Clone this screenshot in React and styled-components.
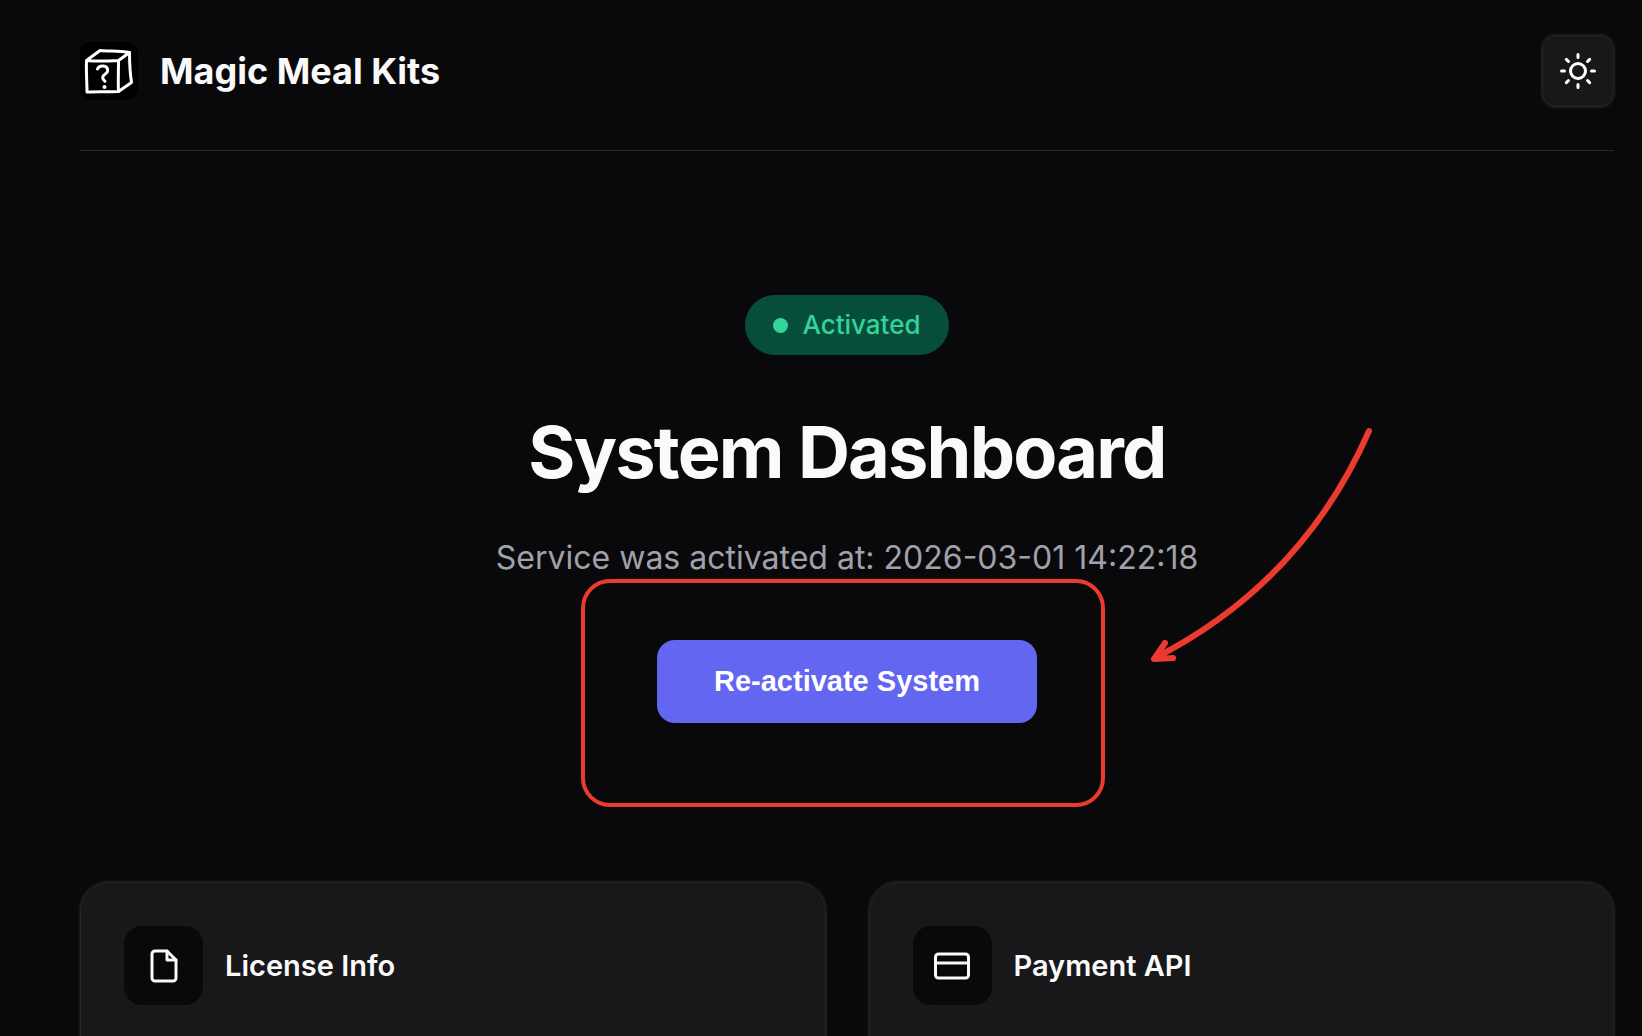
import React from "react";
import styled, { createGlobalStyle } from "styled-components";

function App() {
    return (<Page>
        <GlobalStyle />
        <Header>
            <Brand>
                <Logo />
                <BrandName>Magic Meal Kits</BrandName>
            </Brand>
            <ThemeButton type="button" aria-label="Toggle theme">
                <SunIcon />
            </ThemeButton>
        </Header>
        <Hero>
            <Badge><Dot />Activated</Badge>
            <Title>System Dashboard</Title>
            <Subtitle>Service was activated at: 2026-03-01 14:22:18</Subtitle>
            <Action>
                <PrimaryButton type="button">Re-activate System</PrimaryButton>
                <Highlight />
                <ArrowIcon />
            </Action>
        </Hero>
        <Cards>
            <Card>
                <CardIcon><FileIcon /></CardIcon>
                <CardTitle>License Info</CardTitle>
            </Card>
            <Card>
                <CardIcon><PaymentIcon /></CardIcon>
                <CardTitle>Payment API</CardTitle>
            </Card>
        </Cards>
    </Page>)
}

function Logo() {
    return (<LogoSvg viewBox="0 0 58 58" aria-hidden="true">
        <path d="M6.5 19 C6 30 7 40 7 50 C17 49.5 28 50 38.5 49.5 C38 40 38.5 29 38.5 18.5 C28 19 17 19.5 6.500 18.500 L20 8.500 C29 9.500 39 8.500 49.500 10.500 L38.500 18.500" />
        <path d="M49.500 10.500 C49.500 20 50 31 51.500 40.500 L38.500 49.500" />
        <path d="M17.500 27 C19 23 27.700 22.500 27.700 28.700 C27.500 32.500 22.500 32 22.700 35.300 C22.800 37.500 24 38.300 25 39.300" />
        <circle cx="24.500" cy="45" r="2" fill="#fff" stroke="none" />
    </LogoSvg>)
}

function SunIcon() {
    return (<Icon viewBox="0 0 24 24" aria-hidden="true">
        <circle cx="12" cy="12" r="5" />
        <path d="M12 1v2M12 21v2M4.22 4.22l1.42 1.42M18.36 18.36l1.42 1.42M1 12h2M21 12h2M4.22 19.78l1.42-1.42M18.36 5.64l1.42-1.42" />
    </Icon>)
}

function FileIcon() {
    return (<Icon viewBox="0 0 24 24" aria-hidden="true">
        <path d="M14 2H6a2 2 0 0 0-2 2v16a2 2 0 0 0 2 2h12a2 2 0 0 0 2-2V8z" />
        <path d="M14 2v6h6" />
    </Icon>)
}

function PaymentIcon() {
    return (<Icon viewBox="0 0 24 24" aria-hidden="true">
        <rect x="1" y="4" width="22" height="16" rx="2" />
        <path d="M1 10h22" />
    </Icon>)
}

function ArrowIcon() {
    return (<ArrowSvg viewBox="0 0 224 240" aria-hidden="true">
        <path d="M219 7 C176 105 105 183 5 234" />
        <path d="M15 219 L4 235 L23 234" />
    </ArrowSvg>)
}

const GlobalStyle = createGlobalStyle`
    * {
        box-sizing: border-box;
    }
    html {
        background: #09090b;
    }
    body {
        margin: 0;
        color: #fafafa;
        font-family: Inter, sans-serif;
        -webkit-font-smoothing: antialiased;
    }
    h1, h2, p {
        margin: 0;
    }
`;
const Page = styled.div`
    height: 100vh;
    overflow: hidden;
    padding: 0 28px 0 80px;
`;
const Header = styled.header`
    display: flex;
    align-items: center;
    justify-content: space-between;
    padding: 35px 0 43px;
    border-bottom: 1px solid #27272a;
`;
const Brand = styled.div`
    display: flex;
    align-items: center;
    gap: 22px;
`;
const LogoSvg = styled.svg`
    width: 58px;
    height: 58px;
    border-radius: 11px;
    background: #000;
    fill: none;
    stroke: #fff;
    stroke-width: 3;
    stroke-linecap: round;
    stroke-linejoin: round;
`;
const BrandName = styled.span`
    font-size: 36px;
    line-height: 58px;
    font-weight: 700;
`;
const ThemeButton = styled.button`
    display: flex;
    align-items: center;
    justify-content: center;
    width: 72px;
    height: 72px;
    padding: 0;
    color: #fff;
    background: #18181b;
    border: 1px solid #27272a;
    border-radius: 14px;
    box-shadow: 0 0 0 2px #131315;
    cursor: pointer;
`;
const Icon = styled.svg`
    width: 36px;
    height: 36px;
    fill: none;
    stroke: currentColor;
    stroke-width: 2;
    stroke-linecap: round;
    stroke-linejoin: round;
`;
const Hero = styled.section`
    display: flex;
    flex-direction: column;
    align-items: center;
    padding: 144px 0 159px;
`;
const Badge = styled.div`
    display: flex;
    align-items: center;
    gap: 14px;
    height: 60px;
    padding: 0 28px;
    border-radius: 30px;
    color: #34d399;
    background: #064e3b;
    font-size: 26px;
    line-height: 30px;
    font-weight: 500;
`;
const Dot = styled.span`
    width: 15px;
    height: 15px;
    border-radius: 50%;
    background: #34d399;
`;
const Title = styled.h1`
    margin-top: 57px;
    font-size: 72px;
    line-height: 80px;
    font-weight: 700;
    letter-spacing: -0.025em;
`;
const Subtitle = styled.p`
    margin-top: 40px;
    color: #a1a1aa;
    font-size: 32px;
    line-height: 52px;
`;
const Action = styled.div`
    position: relative;
    margin-top: 56px;
`;
const PrimaryButton = styled.button`
    display: block;
    height: 83px;
    padding: 0 57px;
    border: 0;
    border-radius: 18px;
    color: #fff;
    background: #6366f1;
    font-family: "Liberation Sans", Arial, sans-serif;
    font-size: 29px;
    font-weight: 700;
    cursor: pointer;
`;
const Highlight = styled.span`
    position: absolute;
    top: -61px;
    right: -68px;
    bottom: -84px;
    left: -76px;
    border: 4px solid #ec3a2f;
    border-radius: 29px;
    pointer-events: none;
`;
const ArrowSvg = styled.svg`
    position: absolute;
    top: -216px;
    left: calc(100% + 113px);
    width: 224px;
    height: 240px;
    fill: none;
    stroke: #ec3a2f;
    stroke-width: 6;
    stroke-linecap: round;
    stroke-linejoin: round;
    pointer-events: none;
`;
const Cards = styled.section`
    display: grid;
    grid-template-columns: 1fr 1fr;
    gap: 43px;
`;
const Card = styled.article`
    display: flex;
    align-items: flex-start;
    gap: 22px;
    min-height: 240px;
    padding: 43px;
    background: #18181b;
    border: 1px solid #27272a;
    border-radius: 29px;
    box-shadow: 0 0 0 2px #131315;
`;
const CardIcon = styled.div`
    display: flex;
    align-items: center;
    justify-content: center;
    width: 79px;
    height: 79px;
    border-radius: 18px;
    background: #09090b;
`;
const CardTitle = styled.h2`
    font-size: 29px;
    line-height: 79px;
    font-weight: 600;
`;

export default App;
